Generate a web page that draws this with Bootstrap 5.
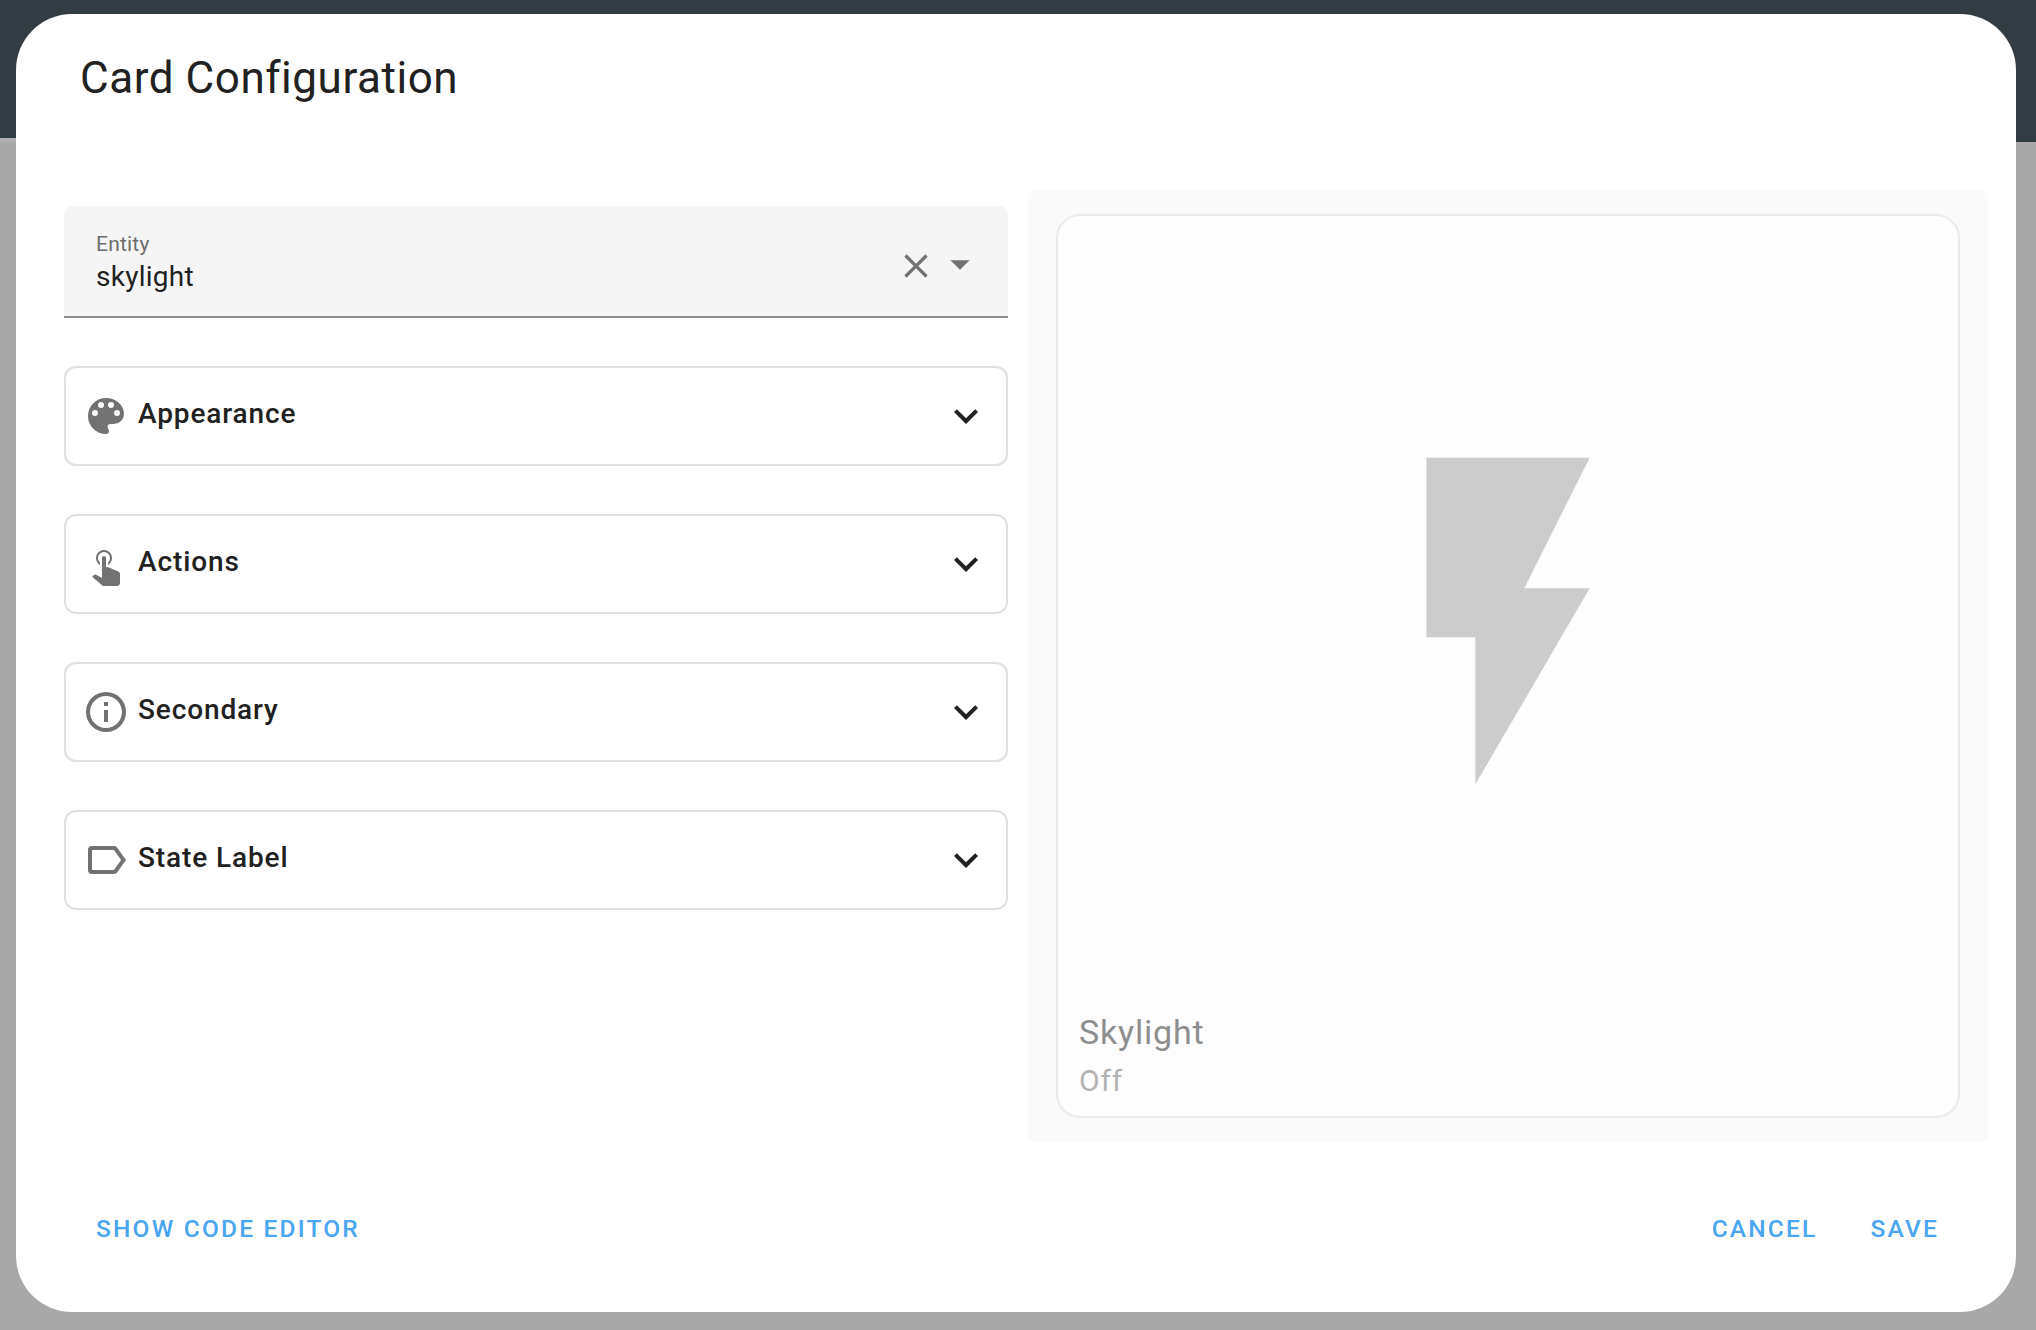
<!DOCTYPE html>
<html lang="en">
<head>
<meta charset="utf-8">
<meta name="viewport" content="width=device-width, initial-scale=1">
<title>Card Configuration</title>
<link rel="stylesheet" href="https://cdn.jsdelivr.net/npm/bootstrap@5.3.0/dist/css/bootstrap.min.css">
<style>
body{font-family:Roboto,sans-serif;color:#212121;background:linear-gradient(#323d43 0 140px,#a8a8a8 140px);height:1330px;overflow:hidden}
.backdrop-edge{left:0;top:138px;width:16px;height:4px;background:#b0b0b0}
.backdrop-header{right:0;top:138px;width:20px;height:4px;background:#323d43}
.config-dialog{margin:14px 20px 0 16px;height:1298px;border-radius:56px;background:#fff;padding-top:36px}
.dialog-heading{font-size:44px;line-height:56px;letter-spacing:.55px;margin:0 0 84px 64px;font-weight:400}
.dialog-content{padding:0 28px 0 48px;gap:20px;height:952px}
.form-column{width:944px;padding-top:16px;gap:48px}
.entity-field{height:112px;background:#f5f5f5;border-radius:8px 8px 0 0;border-bottom:2px solid #8c8c8c;padding:0 24px 0 32px}
.entity-text{padding-top:26px}
.entity-label{font-size:21px;line-height:24px;letter-spacing:.2px;color:#6d6d6d;margin-bottom:5px}
.entity-value{font-size:28px;line-height:32px;letter-spacing:.26px}
.entity-icons{height:120px;color:#727272}
.option-panel{height:100px;border:2px solid #e0e0e0;border-radius:12px;padding:0 16px}
.option-panel .lead-icon{color:#727272;margin-right:8px}
.option-title{font-size:28px;line-height:32px;font-weight:500;letter-spacing:.88px;padding-bottom:5px}
.preview-pane{width:960px;height:952px;background:#fafafa;border-radius:8px;padding:24px 28px}
.entity-card{height:904px;border:2px solid #ebebeb;border-radius:24px;background:#fdfdfd;padding:0 21px 8px}
.bolt-area{height:809px;color:#ccc}
.state-name{font-size:34px;line-height:40px;letter-spacing:.8px;color:#8e8e8e;margin-top:-13px}
.state-value{font-size:30px;line-height:58px;letter-spacing:.8px;color:#b3b3b3}
.dialog-actions{padding:51px 77px 0 80px}
.text-action{font-size:24.5px;line-height:72px;font-weight:500;letter-spacing:2.19px;color:#4aa6f0;background:none;border:0;padding:0}
.action-pair{gap:53px}
svg{display:block;fill:currentColor;flex:none}
</style>
<script src="https://cdn.jsdelivr.net/npm/bootstrap@5.3.0/dist/js/bootstrap.bundle.min.js"></script>
</head>
<body>
<div class="backdrop-edge position-absolute"></div>
<div class="backdrop-header position-absolute"></div>
<main class="config-dialog position-relative">
  <h1 class="dialog-heading">Card Configuration</h1>
  <div class="dialog-content d-flex">
    <div class="form-column d-flex flex-column">
      <div class="entity-field d-flex justify-content-between">
        <div class="entity-text">
          <div class="entity-label">Entity</div>
          <div class="entity-value">skylight</div>
        </div>
        <div class="entity-icons d-flex align-items-center">
          <svg width="40" height="40" viewBox="0 0 24 24"><path d="M19,6.41L17.59,5L12,10.59L6.41,5L5,6.41L10.59,12L5,17.59L6.41,19L12,13.41L17.59,19L19,17.59L13.41,12L19,6.41Z"/></svg>
          <svg width="48" height="48" viewBox="0 0 24 24"><path d="M7.2,9.1L12,13.9L16.8,9.1H7.2Z"/></svg>
        </div>
      </div>
      <div class="option-panel d-flex align-items-center">
        <svg class="lead-icon" width="48" height="48" viewBox="0 0 24 24"><path d="M17.5,12A1.5,1.5 0 0,1 16,10.5A1.5,1.5 0 0,1 17.5,9A1.5,1.5 0 0,1 19,10.5A1.5,1.5 0 0,1 17.5,12M14.5,8A1.5,1.5 0 0,1 13,6.5A1.5,1.5 0 0,1 14.5,5A1.5,1.5 0 0,1 16,6.5A1.5,1.5 0 0,1 14.5,8M9.5,8A1.5,1.5 0 0,1 8,6.5A1.5,1.5 0 0,1 9.5,5A1.5,1.5 0 0,1 11,6.5A1.5,1.5 0 0,1 9.5,8M6.5,12A1.5,1.5 0 0,1 5,10.5A1.5,1.5 0 0,1 6.5,9A1.5,1.5 0 0,1 8,10.5A1.5,1.5 0 0,1 6.5,12M12,3A9,9 0 0,0 3,12A9,9 0 0,0 12,21A1.5,1.5 0 0,0 13.5,19.5C13.5,19.11 13.35,18.76 13.11,18.5C12.88,18.23 12.73,17.88 12.73,17.5A1.5,1.5 0 0,1 14.23,16H16A5,5 0 0,0 21,11C21,6.58 16.97,3 12,3Z"/></svg>
        <div class="option-title flex-grow-1">Appearance</div>
        <svg width="48" height="48" viewBox="0 0 24 24"><path d="M7.41,8.58L12,13.17L16.59,8.58L18,10L12,16L6,10L7.41,8.58Z"/></svg>
      </div>
      <div class="option-panel d-flex align-items-center">
        <svg class="lead-icon" width="48" height="48" viewBox="0 0 24 24"><path d="M10,9A1,1 0 0,1 11,8A1,1 0 0,1 12,9V13.47L13.21,13.6L18.15,15.79C18.68,16.03 19,16.56 19,17.14V21.5C18.97,22.32 18.32,22.97 17.5,23H11C10.62,23 10.26,22.85 10,22.57L5.1,18.37L5.84,17.6C6.03,17.39 6.3,17.28 6.58,17.28H6.8L10,19V9M11,5A4,4 0 0,1 15,9C15,10.5 14.2,11.77 13,12.46V11.24C13.61,10.69 14,9.89 14,9A3,3 0 0,0 11,6A3,3 0 0,0 8,9C8,9.89 8.39,10.69 9,11.24V12.46C7.8,11.77 7,10.5 7,9A4,4 0 0,1 11,5Z"/></svg>
        <div class="option-title flex-grow-1">Actions</div>
        <svg width="48" height="48" viewBox="0 0 24 24"><path d="M7.41,8.58L12,13.17L16.59,8.58L18,10L12,16L6,10L7.41,8.58Z"/></svg>
      </div>
      <div class="option-panel d-flex align-items-center">
        <svg class="lead-icon" width="48" height="48" viewBox="0 0 24 24"><path d="M11,9H13V7H11M12,20C7.59,20 4,16.41 4,12C4,7.59 7.59,4 12,4C16.41,4 20,7.59 20,12C20,16.41 16.41,20 12,20M12,2A10,10 0 0,0 2,12A10,10 0 0,0 12,22A10,10 0 0,0 22,12A10,10 0 0,0 12,2M11,17H13V11H11V17Z"/></svg>
        <div class="option-title flex-grow-1">Secondary</div>
        <svg width="48" height="48" viewBox="0 0 24 24"><path d="M7.41,8.58L12,13.17L16.59,8.58L18,10L12,16L6,10L7.41,8.58Z"/></svg>
      </div>
      <div class="option-panel d-flex align-items-center">
        <svg class="lead-icon" width="48" height="48" viewBox="0 0 24 24"><path d="M16,17H5V7H16L19.55,12M17.63,5.84C17.27,5.33 16.67,5 16,5H5A2,2 0 0,0 3,7V17A2,2 0 0,0 5,19H16C16.67,19 17.27,18.66 17.63,18.15L22,12L17.63,5.84Z"/></svg>
        <div class="option-title flex-grow-1">State Label</div>
        <svg width="48" height="48" viewBox="0 0 24 24"><path d="M7.41,8.58L12,13.17L16.59,8.58L18,10L12,16L6,10L7.41,8.58Z"/></svg>
      </div>
    </div>
    <div class="preview-pane">
      <div class="entity-card">
        <div class="bolt-area d-flex align-items-center justify-content-center">
          <svg width="392" height="392" viewBox="0 0 24 24"><path d="M7,2V13H10V22L17,10H13L17,2H7Z"/></svg>
        </div>
        <div class="state-name">Skylight</div>
        <div class="state-value">Off</div>
      </div>
    </div>
  </div>
  <div class="dialog-actions d-flex justify-content-between">
    <button class="text-action">SHOW CODE EDITOR</button>
    <div class="action-pair d-flex">
      <button class="text-action">CANCEL</button>
      <button class="text-action">SAVE</button>
    </div>
  </div>
</main>
</body>
</html>
